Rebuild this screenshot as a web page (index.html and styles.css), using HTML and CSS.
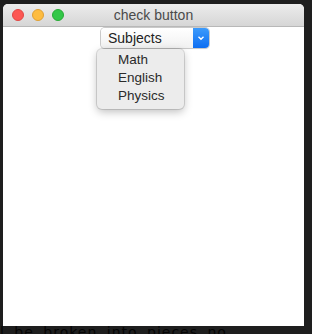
FILE: index.html
```html
<!DOCTYPE html>
<html>
  <head>
    <title>check button</title>
    <link rel="stylesheet" href="styles.css">
  </head>

  <body>
    <div class="window">
      <div class="titlebar">
        <div class="lights">
          <span class="light red"></span>
          <span class="light yellow"></span>
          <span class="light green"></span>
        </div>
        <div class="title">check button</div>
      </div>
      <div class="content">
        <div class="select">
          <span class="select-label">Subjects</span>
          <span class="select-arrow">
            <svg width="8" height="6" viewBox="0 0 8 6">
              <path d="M1.5 1.8 L4 4.2 L6.5 1.8" fill="none" stroke="white" stroke-width="1.4" />
            </svg>
          </span>
          <ul class="menu">
            <li>Math</li>
            <li>English</li>
            <li>Physics</li>
          </ul>
        </div>
      </div>
    </div>
    <div class="behind">l be broken into pieces no</div>
  </body>
</html>
```

FILE: styles.css
```css
body {
  margin: 0;
  background-color: #1e1e1e;
  font-family: "Liberation Sans", Arial, sans-serif;
  overflow: hidden;
  height: 334px;
}

.window {
  margin: 4px 0 0 3px;
  width: 301px;
  height: 322px;
  background: white;
  border-radius: 5px 5px 0 0;
  overflow: hidden;
  display: flex;
  flex-direction: column;
}

.titlebar {
  height: 22px;
  background: linear-gradient(#ececec, #d6d6d6);
  border-bottom: 1px solid #b8b8b8;
  display: flex;
  align-items: center;
  position: relative;
}

.lights {
  display: flex;
  gap: 8px;
  padding-left: 9px;
}

.light {
  width: 12px;
  height: 12px;
  border-radius: 50%;
  box-sizing: border-box;
}

.red {
  background: #fc5753;
  border: 1px solid #df4744;
}

.yellow {
  background: #fdbc40;
  border: 1px solid #de9f34;
}

.green {
  background: #33c748;
  border: 1px solid #27aa35;
}

.title {
  position: absolute;
  left: 0;
  right: 0;
  text-align: center;
  font-size: 14px;
  color: #4a4a4a;
  line-height: 22px;
}

.content {
  flex: 1;
  display: flex;
  justify-content: center;
  padding-top: 1px;
}

.select {
  position: relative;
  width: 108px;
  height: 20px;
  display: flex;
  border-radius: 4px;
  background: linear-gradient(#ffffff, #f1f1f1);
  box-shadow: 0 0 0 1px #c9c9c9, 0 1px 1px rgba(0, 0, 0, 0.15);
  margin-left: 3px;
}

.select-label {
  flex: 1;
  font-size: 14px;
  line-height: 20px;
  padding-left: 7px;
  color: #222;
}

.select-arrow {
  width: 16px;
  height: 20px;
  background: linear-gradient(#3d9bfb, #0d6ef2);
  border-radius: 0 4px 4px 0;
  display: flex;
  align-items: center;
  justify-content: center;
}

.menu {
  position: absolute;
  top: 21px;
  left: -4px;
  width: 87px;
  margin: 0;
  padding: 2px 0 4px;
  list-style: none;
  background: #ececec;
  border-radius: 5px;
  box-shadow: 0 0 0 1px rgba(0, 0, 0, 0.12), 0 3px 8px rgba(0, 0, 0, 0.25);
}

.menu li {
  font-size: 13.5px;
  line-height: 18px;
  padding-left: 21px;
  color: #2a2a2a;
}

.behind {
  font-family: "DejaVu Sans", sans-serif;
  font-size: 14px;
  color: #050505;
  letter-spacing: 1px;
  word-spacing: 4px;
  margin-top: -2px;
  white-space: nowrap;
}
```
